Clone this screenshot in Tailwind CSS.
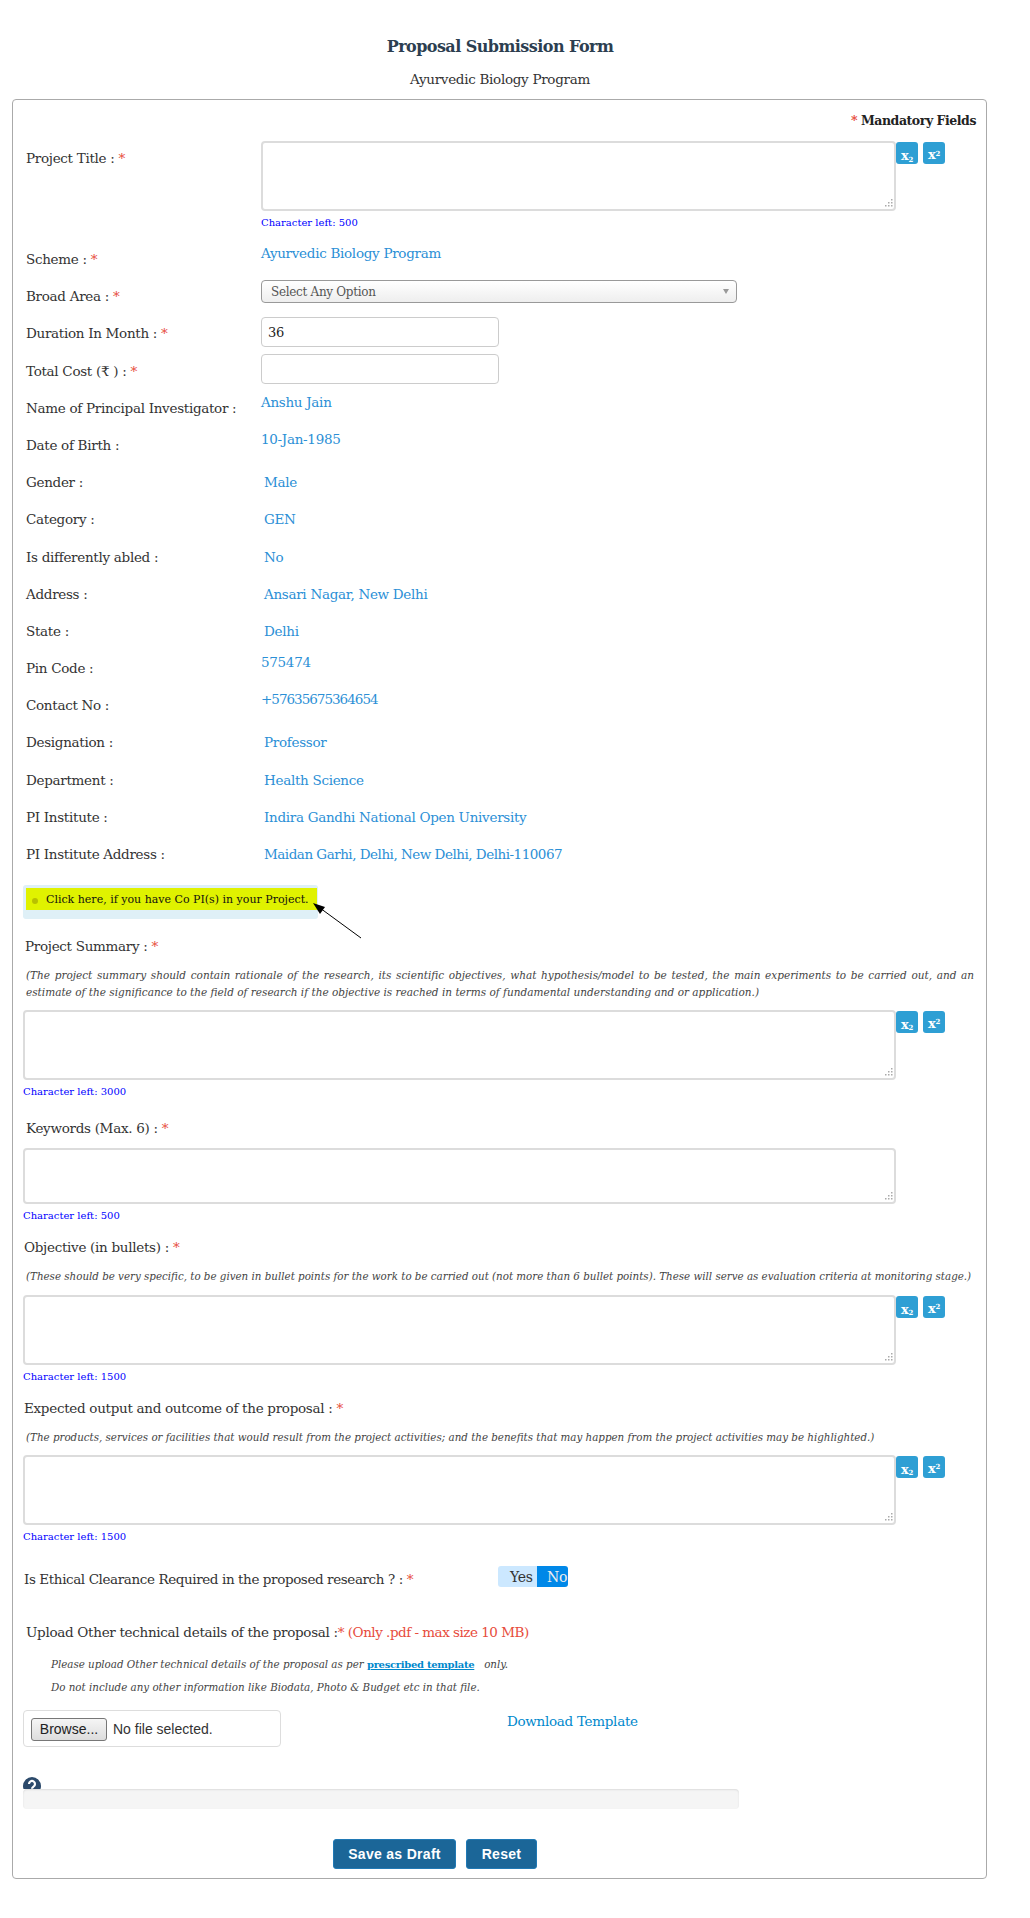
<!DOCTYPE html>
<html lang="en">
<head>
  <meta charset="UTF-8">
  <title>Proposal Submission Form</title>
  <script src="https://cdn.jsdelivr.net/npm/@tailwindcss/browser@4"></script>
</head>
<body class="bg-white font-['DejaVu_Serif',serif] text-[13.5px] tracking-[-0.3px] text-[#333]">
  <div class="w-[1000px]">
    <h1 class="pt-[37px] text-center text-[16px] leading-[20px] font-bold tracking-[-0.55px] text-[#2c3e50]">Proposal Submission Form</h1>
    <p class="mt-[13px] text-center leading-[18px]">Ayurvedic Biology Program</p>
  </div>

  <form class="mt-[11px] ml-[12px] h-[1780px] w-[975px] rounded-[4px] border border-[#aaa] pl-[10px]">
    <div class="h-[41px] pt-[12px] pr-[10px] text-right text-[12.5px] leading-[18px] font-bold tracking-[-0.45px] text-[#222]"><span class="text-[#e74c3c]">*</span> Mandatory Fields</div>

    <!-- title -->
    <div class="flex h-[100px] pl-[3px]">
      <label class="w-[235px] pt-[8px] leading-[18px]">Project Title : <span class="text-[#e74c3c]">*</span></label>
      <div>
        <div class="flex">
          <div class="relative h-[70px] w-[635px]">
            <textarea class="h-full w-full resize-none rounded-[4px] border-2 border-[#dcdcdc]"></textarea>
            <svg class="absolute right-[3px] bottom-[4px]" width="8" height="8" viewBox="0 0 8 8" fill="#aaa"><path d="M6 0h1.500v1.500H6zM3 3h1.500v1.500H3zM6 3h1.500v1.500H6zM0 6h1.500v1.500H0zM3 6h1.500v1.500H3zM6 6h1.500v1.500H6z"/></svg>
          </div>
          <button type="button" class="mt-[1px] h-[22px] w-[22px] rounded-[3px] bg-[#2e9fd4] text-[13px] leading-[28px] font-bold text-white">x<sub class="text-[7px]">2</sub></button>
          <button type="button" class="mt-[1px] ml-[5px] h-[22px] w-[22px] rounded-[3px] bg-[#2e9fd4] text-[13px] leading-[26px] font-bold text-white">x<sup class="text-[7px]">2</sup></button>
        </div>
        <p class="mt-[5px] text-[10px] leading-[14px] tracking-normal text-[#0000ff]">Character left: 500</p>
      </div>
    </div>

    <!-- details -->
    <div class="pl-[3px] leading-[18px]">
      <div class="flex h-[37.2px]"><span class="w-[235px] pt-[9px]">Scheme : <span class="text-[#e74c3c]">*</span></span><span class="pt-[3px] text-[#2b8fd6]">Ayurvedic Biology Program</span></div>
      <div class="flex h-[37.2px]"><span class="w-[235px] pt-[9px]">Broad Area : <span class="text-[#e74c3c]">*</span></span>
        <div class="relative mt-[2px] h-[23px] w-[476px]">
          <select class="h-[23px] w-full appearance-none rounded-[4px] border border-[#999] bg-gradient-to-b from-white to-[#eee] pl-[9px] text-[12px] leading-[18px] text-[#555]"><option>Select Any Option</option></select>
          <span class="absolute top-[9px] right-[8px] h-0 w-0 border-x-[3px] border-t-[5px] border-x-transparent border-t-[#999]"></span>
        </div>
      </div>
      <div class="flex h-[37.2px]"><span class="w-[235px] pt-[9px]">Duration In Month : <span class="text-[#e74c3c]">*</span></span><input value="36" class="mt-[2px] h-[30px] w-[238px] rounded-[4px] border border-[#ccc] px-[6px] text-[13px] text-[#222]"></div>
      <div class="flex h-[37.2px]"><span class="w-[235px] pt-[9px]">Total Cost (₹ ) : <span class="text-[#e74c3c]">*</span></span><input class="mt-[1.5px] h-[30px] w-[238px] rounded-[4px] border border-[#ccc] px-[6px]"></div>
      <div class="flex h-[37.2px]"><span class="w-[235px] pt-[9px]">Name of Principal Investigator :</span><span class="pt-[3px] text-[#2b8fd6]">Anshu Jain</span></div>
      <div class="flex h-[37.2px]"><span class="w-[235px] pt-[9px]">Date of Birth :</span><span class="pt-[3px] text-[#2b8fd6]">10-Jan-1985</span></div>
      <div class="flex h-[37.2px]"><span class="w-[238px] pt-[9px]">Gender :</span><span class="pt-[9px] text-[#2b8fd6]">Male</span></div>
      <div class="flex h-[37.2px]"><span class="w-[238px] pt-[9px]">Category :</span><span class="pt-[9px] text-[#2b8fd6]">GEN</span></div>
      <div class="flex h-[37.2px]"><span class="w-[238px] pt-[9px]">Is differently abled :</span><span class="pt-[9px] text-[#2b8fd6]">No</span></div>
      <div class="flex h-[37.2px]"><span class="w-[238px] pt-[9px]">Address :</span><span class="pt-[9px] text-[#2b8fd6]">Ansari Nagar, New Delhi</span></div>
      <div class="flex h-[37.2px]"><span class="w-[238px] pt-[9px]">State :</span><span class="pt-[9px] text-[#2b8fd6]">Delhi</span></div>
      <div class="flex h-[37.2px]"><span class="w-[235px] pt-[9px]">Pin Code :</span><span class="pt-[3px] text-[#2b8fd6]">575474</span></div>
      <div class="flex h-[37.2px]"><span class="w-[235px] pt-[9px]">Contact No :</span><span class="pt-[3px] tracking-[-1px] text-[#2b8fd6]">+57635675364654</span></div>
      <div class="flex h-[37.2px]"><span class="w-[238px] pt-[9px]">Designation :</span><span class="pt-[9px] text-[#2b8fd6]">Professor</span></div>
      <div class="flex h-[37.2px]"><span class="w-[238px] pt-[9px]">Department :</span><span class="pt-[9px] text-[#2b8fd6]">Health Science</span></div>
      <div class="flex h-[37.2px]"><span class="w-[238px] pt-[9px]">PI Institute :</span><span class="pt-[9px] text-[#2b8fd6]">Indira Gandhi National Open University</span></div>
      <div class="flex h-[37.2px]"><span class="w-[238px] pt-[9px]">PI Institute Address :</span><span class="pt-[9px] tracking-[-0.5px] text-[#2b8fd6]">Maidan Garhi, Delhi, New Delhi, Delhi-110067</span></div>
    </div>

    <!-- co-pi notice -->
    <div class="relative mt-[12px] h-[34px] w-[295px] rounded-[3px] bg-[#dff0f7] pt-[3px] pl-[3px]">
      <div class="flex h-[22px] w-[291px] items-center bg-[#e0f200] pt-[3px] pl-[6px] text-[11px] tracking-normal text-[#111]">
        <span class="mr-[8px] h-[6px] w-[6px] rounded-full bg-[#b8c000]"></span>Click here, if you have Co PI(s) in your Project.
      </div>
      <svg class="absolute top-[14px] left-[285px]" width="60" height="45" viewBox="0 0 60 45"><path d="M53 39 12 9" stroke="#000" stroke-width="1" fill="none"/><path d="M5 4 17 8 12 15Z" fill="#000"/></svg>
    </div>

    <div class="mt-[17px] pl-[2px] leading-[20px]">Project Summary : <span class="text-[#e74c3c]">*</span></div>
    <p class="mt-[11px] w-[951px] pl-[3px] text-justify text-[10.5px] leading-[17px] tracking-normal text-[#444] italic">(The project summary should contain rationale of the research, its scientific objectives, what hypothesis/model to be tested, the main experiments to be carried out, and an estimate of the significance to the field of research if the objective is reached in terms of fundamental understanding and or application.)</p>
    <div class="mt-[8.5px] flex">
      <div class="relative h-[70px] w-[873px]">
        <textarea class="h-full w-full resize-none rounded-[4px] border-2 border-[#dcdcdc]"></textarea>
        <svg class="absolute right-[3px] bottom-[4px]" width="8" height="8" viewBox="0 0 8 8" fill="#aaa"><path d="M6 0h1.500v1.500H6zM3 3h1.500v1.500H3zM6 3h1.500v1.500H6zM0 6h1.500v1.500H0zM3 6h1.500v1.500H3zM6 6h1.500v1.500H6z"/></svg>
      </div>
      <button type="button" class="mt-[1px] h-[22px] w-[22px] rounded-[3px] bg-[#2e9fd4] text-[13px] leading-[28px] font-bold text-white">x<sub class="text-[7px]">2</sub></button>
      <button type="button" class="mt-[1px] ml-[5px] h-[22px] w-[22px] rounded-[3px] bg-[#2e9fd4] text-[13px] leading-[26px] font-bold text-white">x<sup class="text-[7px]">2</sup></button>
    </div>
    <p class="mt-[5px] text-[10px] leading-[14px] tracking-normal text-[#0000ff]">Character left: 3000</p>

    <div class="mt-[19px] pl-[3px] leading-[20px]">Keywords (Max. 6) : <span class="text-[#e74c3c]">*</span></div>
    <div class="relative mt-[10px] h-[56px] w-[873px]">
      <textarea class="h-full w-full resize-none rounded-[4px] border-2 border-[#dcdcdc]"></textarea>
      <svg class="absolute right-[3px] bottom-[4px]" width="8" height="8" viewBox="0 0 8 8" fill="#aaa"><path d="M6 0h1.500v1.500H6zM3 3h1.500v1.500H3zM6 3h1.500v1.500H6zM0 6h1.500v1.500H0zM3 6h1.500v1.500H3zM6 6h1.500v1.500H6z"/></svg>
    </div>
    <p class="mt-[5px] text-[10px] leading-[14px] tracking-normal text-[#0000ff]">Character left: 500</p>

    <div class="mt-[14px] pl-[1px] leading-[20px]">Objective (in bullets) : <span class="text-[#e74c3c]">*</span></div>
    <p class="mt-[11.5px] pl-[3px] text-[10.3px] leading-[17px] tracking-normal whitespace-nowrap text-[#444] italic">(These should be very specific, to be given in bullet points for the work to be carried out (not more than 6 bullet points). These will serve as evaluation criteria at monitoring stage.)</p>
    <div class="mt-[9.5px] flex">
      <div class="relative h-[70px] w-[873px]">
        <textarea class="h-full w-full resize-none rounded-[4px] border-2 border-[#dcdcdc]"></textarea>
        <svg class="absolute right-[3px] bottom-[4px]" width="8" height="8" viewBox="0 0 8 8" fill="#aaa"><path d="M6 0h1.500v1.500H6zM3 3h1.500v1.500H3zM6 3h1.500v1.500H6zM0 6h1.500v1.500H0zM3 6h1.500v1.500H3zM6 6h1.500v1.500H6z"/></svg>
      </div>
      <button type="button" class="mt-[1px] h-[22px] w-[22px] rounded-[3px] bg-[#2e9fd4] text-[13px] leading-[28px] font-bold text-white">x<sub class="text-[7px]">2</sub></button>
      <button type="button" class="mt-[1px] ml-[5px] h-[22px] w-[22px] rounded-[3px] bg-[#2e9fd4] text-[13px] leading-[26px] font-bold text-white">x<sup class="text-[7px]">2</sup></button>
    </div>
    <p class="mt-[5px] text-[10px] leading-[14px] tracking-normal text-[#0000ff]">Character left: 1500</p>

    <div class="mt-[14px] pl-[1px] leading-[20px]">Expected output and outcome of the proposal : <span class="text-[#e74c3c]">*</span></div>
    <p class="mt-[11.5px] pl-[3px] text-[10.3px] leading-[17px] tracking-normal whitespace-nowrap text-[#444] italic">(The products, services or facilities that would result from the project activities; and the benefits that may happen from the project activities may be highlighted.)</p>
    <div class="mt-[8.5px] flex">
      <div class="relative h-[70px] w-[873px]">
        <textarea class="h-full w-full resize-none rounded-[4px] border-2 border-[#dcdcdc]"></textarea>
        <svg class="absolute right-[3px] bottom-[4px]" width="8" height="8" viewBox="0 0 8 8" fill="#aaa"><path d="M6 0h1.500v1.500H6zM3 3h1.500v1.500H3zM6 3h1.500v1.500H6zM0 6h1.500v1.500H0zM3 6h1.500v1.500H3zM6 6h1.500v1.500H6z"/></svg>
      </div>
      <button type="button" class="mt-[1px] h-[22px] w-[22px] rounded-[3px] bg-[#2e9fd4] text-[13px] leading-[28px] font-bold text-white">x<sub class="text-[7px]">2</sub></button>
      <button type="button" class="mt-[1px] ml-[5px] h-[22px] w-[22px] rounded-[3px] bg-[#2e9fd4] text-[13px] leading-[26px] font-bold text-white">x<sup class="text-[7px]">2</sup></button>
    </div>
    <p class="mt-[5px] text-[10px] leading-[14px] tracking-normal text-[#0000ff]">Character left: 1500</p>

    <!-- ethical clearance -->
    <div class="mt-[22px] flex h-[21px] pl-[1px]">
      <span class="w-[474px] pt-[3px] leading-[20px] tracking-[-0.4px]">Is Ethical Clearance Required in the proposed research ? : <span class="text-[#e74c3c]">*</span></span>
      <div class="flex h-[21px] w-[70px] overflow-hidden rounded-[3px] text-[14px] leading-[22px]">
        <span class="w-[39px] bg-[#cce8ff] pl-[12px]">Yes</span>
        <span class="w-[31px] bg-[#0088e8] pl-[10px] text-[#eee]">No</span>
      </div>
    </div>

    <!-- upload -->
    <div class="mt-[35px] pl-[3px] leading-[20px]">Upload Other technical details of the proposal :<span class="tracking-[-0.5px] text-[#e74c3c]">* (Only .pdf - max size 10 MB)</span></div>
    <p class="mt-[13px] pl-[28px] text-[10.3px] leading-[18px] tracking-normal text-[#444] italic">Please upload Other technical details of the proposal as per <a href="#" class="text-[10px] font-bold tracking-[-0.3px] text-[#0088cc] not-italic underline">prescribed template</a> &nbsp; only.</p>
    <p class="mt-[4px] pl-[28px] text-[10.3px] leading-[18px] tracking-normal text-[#444] italic">Do not include any other information like Biodata, Photo &amp; Budget etc in that file.</p>
    <div class="mt-[14px] flex">
      <div class="flex h-[37px] w-[258px] items-center rounded-[4px] border border-[#ddd] pt-[2px] pl-[7px] font-['Liberation_Sans',sans-serif] text-[14px] tracking-normal">
        <button type="button" class="h-[23px] w-[76px] rounded-[3px] border border-[#777] bg-gradient-to-b from-[#f5f5f5] to-[#ddd] text-[14px] leading-[20px] text-[#222]">Browse...</button>
        <span class="ml-[6px] text-[#333]">No file selected.</span>
      </div>
      <a href="#" class="ml-[226px] pt-[2px] leading-[18px] text-[#0088cc]">Download Template</a>
    </div>

    <!-- progress -->
    <div class="mt-[30px] h-[12px] overflow-hidden">
      <svg width="18" height="18" viewBox="0 0 18 18"><circle cx="9" cy="9" r="9" fill="#2c4a6b"/><path d="M6 7a3 3 0 1 1 4.5 2.6C9.6 10.2 9 10.700 9 11.800" stroke="#fff" stroke-width="2.200" fill="none"/></svg>
    </div>
    <div class="h-[20px] w-[716px] rounded-[4px] bg-[#f5f5f5] shadow-[inset_0_1px_2px_rgba(0,0,0,0.1)]"></div>

    <div class="mt-[30px] ml-[310px] flex gap-[10px] font-['Liberation_Sans',sans-serif] text-[14px] font-bold tracking-[0.3px] text-white">
      <button type="button" class="h-[30px] w-[123px] rounded-[3px] border border-[#2079b5] bg-[#1b6698] pt-[1px]">Save as Draft</button>
      <button type="button" class="h-[30px] w-[71px] rounded-[3px] border border-[#2079b5] bg-[#1b6698] pt-[1px]">Reset</button>
    </div>
  </form>
</body>
</html>
